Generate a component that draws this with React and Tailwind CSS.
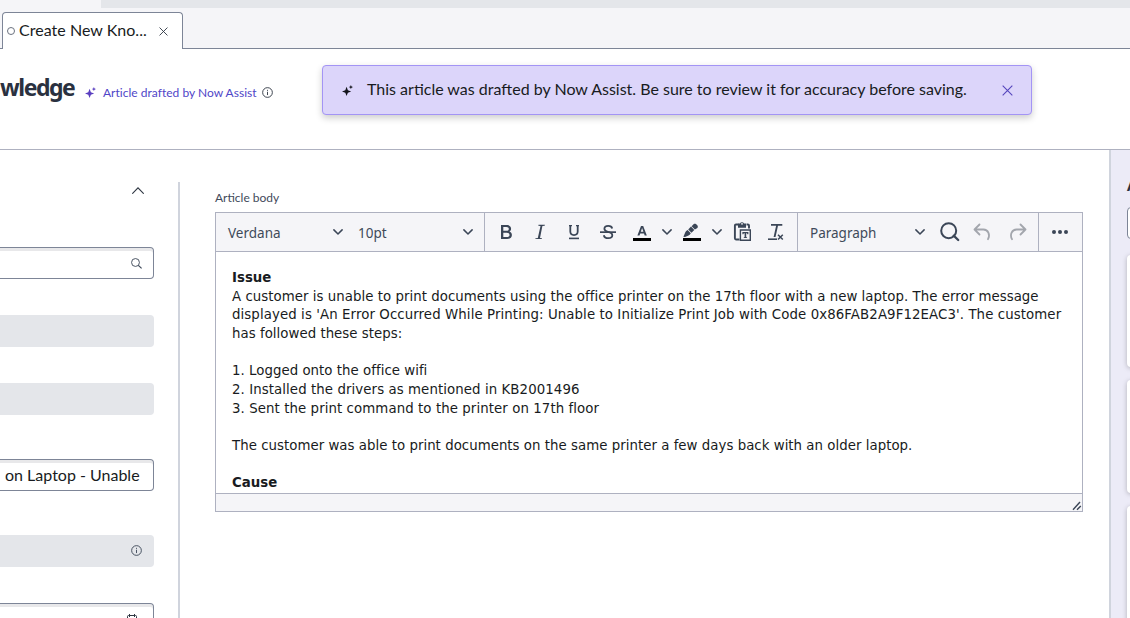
import React from "react";

function Sparkle({ className }) {
  return (
    <svg viewBox="0 0 12 12" className={className} fill="currentColor">
      <path d="M5 2 L6.4 5.6 L10 7 L6.4 8.4 L5 12 L3.6 8.4 L0 7 L3.6 5.6Z" />
      <path d="M9.7 0 L10.4 1.5 L12 2.2 L10.4 2.9 L9.7 4.4 L9 2.9 L7.4 2.2 L9 1.5Z" />
    </svg>
  );
}

function Cross({ className }) {
  return (
    <svg viewBox="0 0 10 10" className={className} fill="none" stroke="currentColor">
      <path d="M.6 .6 L9.4 9.4 M9.4 .6 L.6 9.4" />
    </svg>
  );
}

function Info({ className }) {
  return (
    <svg viewBox="0 0 12 12" className={className} fill="none" stroke="currentColor">
      <circle cx="6" cy="6" r="5.3" />
      <path d="M6 5.2V8.8M6 3.1V4.2" />
    </svg>
  );
}

function Chevron() {
  return (
    <svg viewBox="0 0 10 6" className="h-[6px] w-[10px] shrink-0" fill="none" stroke="#3b4657" strokeWidth="1.5" strokeLinecap="round" strokeLinejoin="round">
      <path d="M.9 .9 L5 5 L9.1 .9" />
    </svg>
  );
}

function Tool({ children, className }) {
  return (
    <svg viewBox="0 0 24 24" className={"h-6 w-6 shrink-0 " + (className || "")} fill="#3b4657">
      {children}
    </svg>
  );
}

function TabBar() {
  return (
    <div className="flex h-[49px] shrink-0 flex-col bg-[#f5f5f8]">
      <div className="ml-[101px] h-2 shrink-0 bg-[#e4e6ea]" />
      <div className="flex flex-1 items-stretch pt-1">
        <div className="w-[2px] border-b border-[#7d8597]" />
        <div className="flex w-[181px] items-center rounded-t-[4px] border border-b-0 border-[#7d8597] bg-white pl-1 pr-[14px]">
          <span className="h-2 w-2 shrink-0 rounded-full border border-[#6b7280]" />
          <span className="ml-1 pb-[2px] whitespace-nowrap text-[16px] leading-6 tracking-[0.03px] text-[#181b21]">Create New Kno...</span>
          <Cross className="ml-auto h-[9px] w-[9px] shrink-0 text-[#2e3642]" />
        </div>
        <div className="flex-1 border-b border-[#7d8597]" />
      </div>
    </div>
  );
}

function Header() {
  return (
    <header className="flex h-[101px] shrink-0 items-start border-b border-[#aeb1c0] bg-white">
      <div className="flex w-[322px] shrink-0 items-start">
        <h1 className="w-[85px] whitespace-nowrap pt-[22px] font-['Noto_Sans'] text-[23px] leading-8 font-bold tracking-[-1.45px] text-[#2a3140]">wledge</h1>
        <Sparkle className="mt-[38px] h-[11px] w-[11px] shrink-0 text-[#5a3fc0]" />
        <span className="ml-[7px] mt-[34px] whitespace-nowrap text-[12px] leading-5 tracking-[0.02px] text-[#4f46c8]">Article drafted by Now Assist</span>
        <Info className="ml-[5px] mt-[38px] h-[11px] w-[11px] shrink-0 text-[#2e3642]" />
      </div>
      <div className="mt-4 flex h-[50px] w-[710px] items-center rounded-[4px] border border-[#a394f5] bg-[#dcd5fa] pl-[19px] pr-[18px] shadow-[0_3px_7px_rgba(0,0,0,0.2)]">
        <Sparkle className="h-[11px] w-[11px] shrink-0 text-[#14151c]" />
        <span className="ml-[14px] pb-[2px] whitespace-nowrap text-[16px] leading-6 text-[#181b21]">
          This article was drafted by Now Assist. Be sure to review it for accuracy before saving.
        </span>
        <Cross className="ml-auto h-[11px] w-[11px] shrink-0 text-[#5546bd]" />
      </div>
    </header>
  );
}

function Field({ children, className }) {
  return (
    <div className={"flex h-8 shrink-0 items-center rounded-r-[4px] border border-l-0 border-[#7d8597] bg-white shadow-[inset_0_3px_0_#e8e8ea] " + (className || "")}>
      {children}
    </div>
  );
}

function ReadOnly({ children, className }) {
  return (
    <div className={"flex h-8 shrink-0 items-center justify-end rounded-r-[4px] bg-[#e4e6ea] " + (className || "")}>
      {children}
    </div>
  );
}

function Sidebar() {
  return (
    <aside className="flex w-[154px] shrink-0 flex-col">
      <div className="flex h-[97px] shrink-0 items-start justify-end pr-[10px] pt-[37px]">
        <svg viewBox="0 0 12 7" className="h-[7px] w-[12px]" fill="none" stroke="#2e3642" strokeWidth="1.1">
          <path d="M.3 6.7 L6 .8 L11.7 6.7" />
        </svg>
      </div>
      <Field className="justify-end pr-[11px]">
        <svg viewBox="0 0 12 12" className="mt-px h-[11px] w-[11px]" fill="none" stroke="#3b4657" strokeWidth="1">
          <circle cx="4.9" cy="4.9" r="4.3" />
          <path d="M8 8 L11.6 11.3" strokeWidth="1.3" />
        </svg>
      </Field>
      <ReadOnly className="mt-9" />
      <ReadOnly className="mt-9" />
      <Field className="mt-11 pl-[5px]">
        <span className="whitespace-nowrap text-[16px] text-[#181b21]">on Laptop - Unable</span>
      </Field>
      <ReadOnly className="mt-11 pr-3 pb-px">
        <Info className="h-[11px] w-[11px] text-[#3b4657]" />
      </ReadOnly>
      <Field className="mt-9 justify-end pr-4">
        <svg viewBox="0 0 10 12" className="h-[12px] w-[10px]" fill="none" stroke="#2e3642">
          <path d="M.5 11.5V3.5Q.5 2.5 1.5 2.5H8.5Q9.5 2.5 9.5 3.5V11.5ZM2.5 1V4M7.5 1V4" />
        </svg>
      </Field>
    </aside>
  );
}

function Toolbar() {
  return (
    <div className="flex h-[39px] shrink-0 border-b border-[#aeb1c0] bg-[#f5f5f8] font-['Noto_Sans'] text-[14px] text-[#3f4a5a]">
      <div className="flex w-[269px] shrink-0 items-center border-r border-[#aeb1c0] pl-3 pr-[10px]">
        <span className="w-[105px] pt-[2px] text-[13.5px]">Verdana</span>
        <Chevron />
        <span className="ml-[15px] w-[105px] pt-[2px] text-[13.5px]">10pt</span>
        <Chevron />
      </div>
      <div className="flex w-[313px] shrink-0 items-center border-r border-[#aeb1c0] pl-[9px]">
        <Tool>
          <path fillRule="evenodd" d="M7 19V5H12.6C15.4 5 17.1 6.4 17.1 8.7C17.1 10 16.4 11.1 15.3 11.6C16.9 12.1 17.9 13.3 17.9 15C17.9 17.5 16.1 19 13.1 19ZM9.3 10.8H12.4C13.9 10.8 14.8 10.1 14.8 8.9C14.8 7.7 13.9 7 12.4 7H9.3ZM9.3 17H12.8C14.5 17 15.5 16.3 15.5 14.9C15.5 13.6 14.5 12.8 12.8 12.8H9.3Z" />
        </Tool>
        <Tool className="ml-[10px]">
          <path d="M10.5 4.8H16.9L16.7 5.7L14.4 6L12 17.9L14 18.2L13.8 19.1H7.3L7.5 18.2L9.8 17.9L12.5 6L10.3 5.7Z" />
        </Tool>
        <Tool className="ml-[10px]">
          <path d="M7 5H10V6.3H9.2V11.5C9.2 13.3 10.2 14.2 12 14.2S14.8 13.3 14.8 11.5V6.3H14V5H17V6.3H16.6V11.6C16.6 14.4 15 16 12 16S7.4 14.4 7.4 11.6V6.3H7Z" />
          <path d="M7 17.6H17V19.2H7Z" />
        </Tool>
        <Tool className="ml-[10px]">
          <path d="M16.2 8.5C15.8 6.6 14.3 5.9 12.2 5.9C10 5.9 8.4 7 8.4 8.8C8.4 11 10.5 11.4 12.2 11.9C14.2 12.4 16.3 13.1 16.3 15.3C16.3 17.2 14.6 18.2 12.3 18.2C9.8 18.2 8.2 17.1 7.8 15.2" fill="none" stroke="#3b4657" strokeWidth="1.8" />
          <path d="M4 11.3H20V13H4Z" />
        </Tool>
        <Tool className="ml-[10px]">
          <path d="M3 18H21V21H3Z" fill="#000" />
          <path fillRule="evenodd" d="M7.4 15.6L11 6H13.2L16.8 15.6H14.7L14 13.5H10.2L9.5 15.6ZM10.8 11.8H13.4L12.1 8Z" />
        </Tool>
        <span className="ml-2 flex"><Chevron /></span>
        <Tool className="ml-2">
          <path d="M3 18H21V21H3Z" fill="#000" />
          <path d="M3.4 16.8L5.2 12.6C5.7 11.2 6.6 10.5 7.6 9.9L10.8 13.2C10.2 14.3 9.4 15.2 8 15.8L5 16.9Z" />
          <path d="M8.2 9.4L11 6.6L14.3 9.9L11.5 12.7ZM11.6 6.2L13.8 4.1C15.6 2.8 19.2 6 17.4 8L14.9 9.6Z" />
        </Tool>
        <span className="ml-2 flex"><Chevron /></span>
        <Tool className="ml-2">
          <path d="M8.5 4.5H6Q4.9 4.5 4.9 5.6V18.3Q4.9 19.5 6 19.5H9.5M16.5 4.5H17.8Q19 4.5 19 5.6V8.5" fill="none" stroke="#3b4657" strokeWidth="1.9" />
          <path d="M8 3.6H10A2.2 2.2 0 0 1 14 3.6H16V7.8H8Z" />
          <circle cx="12" cy="3.8" r=".9" fill="#f5f5f8" />
          <path fillRule="evenodd" d="M9.7 9.3H21V21H9.7ZM11.1 10.7V19.6H19.6V10.7Z" />
          <path d="M12.4 12H18.4V14.2H17.4L17 13.3H16.2V17L17.1 17.4V18H13.7V17.4L14.6 17V13.3H13.8L13.4 14.2H12.4Z" />
        </Tool>
        <Tool className="ml-[10px]">
          <path d="M7 4H18.3V5.8H14L11.5 17H9.6L12.1 5.8H7Z" />
          <path d="M4 18.4H13V20H4Z" />
          <path d="M14 14.7L18.8 19.5M18.8 14.7L14 19.5" stroke="#3b4657" strokeWidth="1.5" />
        </Tool>
      </div>
      <div className="flex w-[241px] shrink-0 items-center border-r border-[#aeb1c0] pl-3">
        <span className="w-[105px] pt-[2px] text-[13.5px]">Paragraph</span>
        <Chevron />
        <svg viewBox="0 0 20 20" className="ml-[15px] h-5 w-5 shrink-0" fill="none" stroke="#3b4657" strokeWidth="2">
          <circle cx="8.7" cy="8.7" r="7.5" />
          <path d="M13.7 13.7L18.2 18" strokeWidth="2.3" strokeLinecap="round" />
        </svg>
        <svg viewBox="0 0 18 18" className="ml-[13px] h-[18px] w-[18px] shrink-0" fill="none" stroke="#a3a6ad" strokeWidth="1.8" strokeLinecap="round" strokeLinejoin="round">
          <path d="M6.5 1.5L1.5 6.5L6.5 11.5M1.5 6.5H10.5C15 6.5 17.5 11.5 15 16.2" />
        </svg>
        <svg viewBox="0 0 18 18" className="ml-[18px] h-[18px] w-[18px] shrink-0" fill="none" stroke="#a3a6ad" strokeWidth="1.8" strokeLinecap="round" strokeLinejoin="round">
          <path d="M11.5 1.5L16.5 6.5L11.5 11.5M16.5 6.5H7.5C3 6.5 .5 11.5 3 16.2" />
        </svg>
      </div>
      <div className="flex flex-1 items-center justify-center gap-[2px] pr-[2px]">
        <span className="h-1 w-1 rounded-full bg-[#3b4657]" />
        <span className="h-1 w-1 rounded-full bg-[#3b4657]" />
        <span className="h-1 w-1 rounded-full bg-[#3b4657]" />
      </div>
    </div>
  );
}

function Editor() {
  return (
    <section className="flex w-[868px] shrink-0 flex-col pt-[38px]">
      <label className="h-6 text-[12px] leading-5 text-[#3f4a5a]">Article body</label>
      <div className="flex h-[300px] flex-col border border-[#aeb1c0] bg-white">
        <Toolbar />
        <div className="flex-1 overflow-hidden whitespace-nowrap px-4 pt-[17px] font-[Verdana,'DejaVu_Sans',sans-serif] text-[13.333px] leading-[18.667px] text-[#181b21]">
          <p><strong>Issue</strong></p>
          <p className="tracking-[0.038px]">A customer is unable to print documents using the office printer on the 17th floor with a new laptop. The error message</p>
          <p className="tracking-[0.088px]">displayed is 'An Error Occurred While Printing: Unable to Initialize Print Job with Code 0x86FAB2A9F12EAC3'. The customer</p>
          <p className="tracking-[0.03px]">has followed these steps:</p>
          <br />
          <p className="tracking-[0.03px]">1. Logged onto the office wifi</p>
          <p className="tracking-[0.08px]">2. Installed the drivers as mentioned in KB2001496</p>
          <p className="tracking-[0.08px]">3. Sent the print command to the printer on 17th floor</p>
          <br />
          <p className="tracking-[0.03px]">The customer was able to print documents on the same printer a few days back with an older laptop.</p>
          <br />
          <p><strong>Cause</strong></p>
        </div>
        <div className="flex h-[18px] shrink-0 items-end justify-end border-t border-[#aeb1c0] bg-[#f5f5f8]">
          <svg viewBox="0 0 10 10" className="h-[10px] w-[10px]" fill="none" stroke="#3b4657" strokeWidth="1.4">
            <path d="M1 8.8L8 1M5 8.8L8.8 5" />
          </svg>
        </div>
      </div>
    </section>
  );
}

function Panel() {
  return (
    <aside className="flex flex-1 flex-col overflow-hidden border-l-2 border-[#d0d4dd] bg-[#ecebf7] pl-4">
      <div className="h-[57px] shrink-0 pt-[22px] text-[18px] leading-6 font-bold text-[#2a3140]">A</div>
      <div className="h-8 w-40 shrink-0 rounded-[4px] border border-[#7d8597] bg-white" />
      <div className="mt-[16px] h-[112px] w-40 shrink-0 rounded-[4px] bg-white shadow-[0_1px_5px_rgba(0,0,0,0.25)]" />
      <div className="mt-[13px] h-[113px] w-40 shrink-0 rounded-[4px] bg-white shadow-[0_1px_5px_rgba(0,0,0,0.25)]" />
      <div className="mt-[13px] h-[140px] w-40 shrink-0 rounded-[4px] bg-white shadow-[0_1px_5px_rgba(0,0,0,0.25)]" />
    </aside>
  );
}

export default function App() {
  return (
    <div className="flex h-[618px] w-[1130px] flex-col overflow-hidden bg-white font-[Lato,sans-serif]">
      <TabBar />
      <Header />
      <main className="flex min-h-0 flex-1">
        <Sidebar />
        <div className="ml-6 mt-8 w-[2px] shrink-0 bg-[#d0d4dd]" />
        <div className="flex w-[929px] shrink-0 pl-[35px]">
          <Editor />
        </div>
        <Panel />
      </main>
    </div>
  );
}
